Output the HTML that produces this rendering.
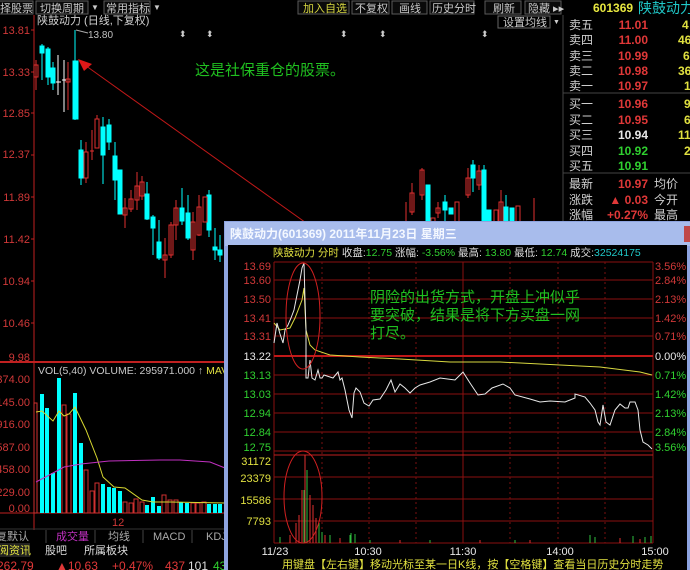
<!DOCTYPE html>
<html><head><meta charset="utf-8"><style>
html,body{margin:0;padding:0;background:#000;width:690px;height:570px;overflow:hidden}
svg{display:block}
text{font-family:"Liberation Sans","Noto Sans CJK SC",sans-serif}
</style></head><body>
<svg width="690" height="570" viewBox="0 0 690 570" xmlns="http://www.w3.org/2000/svg">
<rect width="690" height="570" fill="#000"/>
<!-- toolbar -->
<g font-size="11" fill="#c8c8c8">
<rect x="-2" y="1" width="35" height="13" fill="#0a0a0a" stroke="#5a5a5a"/><text x="0" y="12">择股票</text>
<rect x="36" y="1" width="52" height="13" fill="#0a0a0a" stroke="#5a5a5a"/><text x="40" y="12">切换周期</text>
<text x="91" y="10" font-size="8">▼</text>
<rect x="104" y="1" width="46" height="13" fill="#0a0a0a" stroke="#5a5a5a"/><text x="106" y="12">常用指标</text>
<text x="153" y="10" font-size="8">▼</text>
<rect x="298" y="1" width="51" height="13" fill="#0a0a0a" stroke="#5a5a5a"/><text x="303" y="12" fill="#d8d840">加入自选</text>
<rect x="352" y="1" width="37" height="13" fill="#0a0a0a" stroke="#5a5a5a"/><text x="355" y="12">不复权</text>
<rect x="392" y="1" width="35" height="13" fill="#0a0a0a" stroke="#5a5a5a"/><text x="399" y="12">画线</text>
<rect x="430" y="1" width="44" height="13" fill="#0a0a0a" stroke="#5a5a5a"/><text x="432" y="12">历史分时</text>
<rect x="485" y="1" width="36" height="13" fill="#0a0a0a" stroke="#5a5a5a"/><text x="493" y="12">刷新</text>
<rect x="525" y="1" width="36" height="13" fill="#0a0a0a" stroke="#5a5a5a"/><text x="528" y="12">隐藏 ▸▸</text>
</g>
<text x="593" y="12" font-size="12" font-weight="bold" fill="#e8e840">601369</text>
<text x="638" y="13" font-size="14" fill="#20c8c8">陕鼓动力</text>
<!-- right panel -->
<line x1="563" y1="15" x2="563" y2="225" stroke="#444"/>
<line x1="563" y1="93" x2="690" y2="93" stroke="#444"/>
<line x1="563" y1="173" x2="690" y2="173" stroke="#444"/>
<g font-size="12" fill="#d0d0d0">
<text x="569" y="29">卖五</text><text x="569" y="44">卖四</text><text x="569" y="60">卖三</text><text x="569" y="75">卖二</text><text x="569" y="90">卖一</text>
<text x="569" y="108">买一</text><text x="569" y="124">买二</text><text x="569" y="139">买三</text><text x="569" y="155">买四</text><text x="569" y="170">买五</text>
<text x="569" y="188">最新</text><text x="569" y="204">涨跌</text><text x="569" y="219">涨幅</text>
<text x="654" y="188">均价</text><text x="654" y="204">今开</text><text x="654" y="219">最高</text>
</g>
<g font-size="12" font-weight="bold" text-anchor="end">
<g fill="#e03838"><text x="648" y="29">11.01</text><text x="648" y="44">11.00</text><text x="648" y="60">10.99</text><text x="648" y="75">10.98</text><text x="648" y="90">10.97</text><text x="648" y="108">10.96</text><text x="648" y="124">10.95</text><text x="648" y="188">10.97</text><text x="648" y="204">▲ 0.03</text><text x="648" y="219">+0.27%</text></g>
<text x="648" y="139" fill="#e8e8e8">10.94</text>
<g fill="#30d030"><text x="648" y="155">10.92</text><text x="648" y="170">10.91</text></g>
<g fill="#e0e040" text-anchor="start"><text x="682" y="29">4</text><text x="678" y="44">46</text><text x="683" y="60">6</text><text x="678" y="75">36</text><text x="684" y="90">1</text><text x="684" y="108">9</text><text x="684" y="124">6</text><text x="678" y="139">11</text><text x="684" y="155">2</text></g>
</g>
<!-- K chart axes -->
<line x1="34" y1="15" x2="34" y2="530" stroke="#c02020"/>
<line x1="0" y1="362" x2="563" y2="362" stroke="#c02020" stroke-width="2"/>
<line x1="0" y1="513" x2="225" y2="513" stroke="#c02020"/>
<g font-size="11" fill="#d03838" text-anchor="end">
<text x="30" y="34">13.81</text><text x="30" y="76">13.33</text><text x="30" y="117">12.85</text><text x="30" y="158">12.37</text><text x="30" y="201">11.89</text><text x="30" y="243">11.42</text><text x="30" y="285">10.94</text><text x="30" y="327">10.46</text><text x="30" y="361">9.98</text>
<text x="30" y="383">374.00</text><text x="30" y="406">145.00</text><text x="30" y="428">916.00</text><text x="30" y="451">587.00</text><text x="30" y="473">458.00</text><text x="30" y="496">229.00</text><text x="30" y="512">0.00</text>
</g>
<g stroke="#c02020"><line x1="31" y1="30" x2="34" y2="30"/><line x1="31" y1="72" x2="34" y2="72"/><line x1="31" y1="113" x2="34" y2="113"/><line x1="31" y1="155" x2="34" y2="155"/><line x1="31" y1="197" x2="34" y2="197"/><line x1="31" y1="239" x2="34" y2="239"/><line x1="31" y1="281" x2="34" y2="281"/><line x1="31" y1="323" x2="34" y2="323"/></g>
<text x="37" y="24" font-size="11" fill="#d0d0d0">陕鼓动力 (日线,下复权)</text>
<text x="88" y="38" font-size="10" fill="#c0c0c0">13.80</text>
<line x1="76" y1="30" x2="88" y2="33" stroke="#aaa"/>
<g font-size="9" fill="#ccc"><text x="179" y="37">⬍</text><text x="206" y="37">⬍</text><text x="340" y="37">⬍</text><text x="379" y="37">⬍</text><text x="481" y="37">⬍</text></g>
<rect x="498" y="16" width="52" height="12" fill="#000" stroke="#666"/><text x="503" y="26" font-size="11" fill="#ccc">设置均线</text><text x="553" y="24" font-size="7" fill="#ccc">▼</text>
<text x="195" y="75" font-size="15" fill="#20c020">这是社保重仓的股票。</text>
<!-- candles -->
<g stroke="#00ffff" fill="#00ffff">
<line x1="42" y1="44" x2="42" y2="80"/><rect x="40" y="46" width="4" height="7"/>
<line x1="48" y1="47" x2="48" y2="85"/><rect x="46" y="49" width="4" height="28"/>
<line x1="53" y1="62" x2="53" y2="90"/><rect x="51" y="68" width="4" height="15"/>
<line x1="75" y1="30" x2="75" y2="120"/><rect x="73" y="61" width="5" height="58"/>
<line x1="81" y1="140" x2="81" y2="185"/><rect x="79" y="150" width="4" height="28"/>
<line x1="103" y1="117" x2="103" y2="184"/><rect x="101" y="127" width="4" height="28"/>
<line x1="109" y1="119" x2="109" y2="150"/><rect x="107" y="125" width="4" height="17"/>
<line x1="115" y1="142" x2="115" y2="200"/><rect x="113" y="156" width="4" height="24"/>
<rect x="118" y="170" width="4" height="44"/>
<line x1="147" y1="182" x2="147" y2="220"/><rect x="145" y="194" width="4" height="25"/>
<line x1="153" y1="215" x2="153" y2="255"/><rect x="151" y="217" width="4" height="11"/>
<line x1="159" y1="220" x2="159" y2="260"/><rect x="157" y="242" width="4" height="16"/>
<line x1="182" y1="188" x2="182" y2="225"/><rect x="180" y="208" width="4" height="13"/>
<line x1="188" y1="195" x2="188" y2="240"/><rect x="186" y="213" width="4" height="25"/>
<line x1="209" y1="190" x2="209" y2="237"/><rect x="207" y="195" width="4" height="35"/>
<line x1="215" y1="228" x2="215" y2="260"/><rect x="213" y="247" width="4" height="3"/>
<line x1="220" y1="235" x2="220" y2="262"/><rect x="218" y="250" width="4" height="5"/>
<line x1="428" y1="185" x2="428" y2="222"/><rect x="426" y="185" width="4" height="37"/>
<line x1="445" y1="195" x2="445" y2="222"/><rect x="443" y="202" width="4" height="8"/>
<rect x="449" y="208" width="4" height="6"/>
<line x1="473" y1="160" x2="473" y2="192"/><rect x="471" y="165" width="4" height="13"/>
<line x1="484" y1="165" x2="484" y2="222"/><rect x="482" y="170" width="4" height="52"/>
<rect x="487" y="210" width="4" height="12"/>
<line x1="506" y1="195" x2="506" y2="222"/><rect x="504" y="207" width="4" height="15"/>
<rect x="510" y="208" width="4" height="14"/>
</g>
<g stroke="#e03030" fill="none">
<rect x="34" y="65" width="4" height="12"/><line x1="36" y1="60" x2="36" y2="90"/>
<line x1="68" y1="62" x2="68" y2="110"/><rect x="66" y="79" width="4" height="3"/>
<rect x="84" y="152" width="4" height="26"/><line x1="86" y1="142" x2="86" y2="152"/><line x1="86" y1="178" x2="86" y2="183"/>
<line x1="92" y1="130" x2="92" y2="160"/><line x1="90" y1="151" x2="94" y2="151"/>
<rect x="95" y="119" width="4" height="29"/><line x1="97" y1="115" x2="97" y2="119"/>
<rect x="123" y="208" width="4" height="7"/><line x1="125" y1="198" x2="125" y2="228"/>
<rect x="129" y="199" width="4" height="10"/><line x1="131" y1="190" x2="131" y2="212"/>
<rect x="135" y="186" width="4" height="14"/><line x1="137" y1="172" x2="137" y2="210"/>
<rect x="140" y="182" width="4" height="14"/><line x1="142" y1="176" x2="142" y2="200"/>
<rect x="163" y="255" width="4" height="5"/><line x1="165" y1="238" x2="165" y2="278"/>
<rect x="169" y="225" width="4" height="30"/><line x1="171" y1="222" x2="171" y2="258"/>
<rect x="174" y="208" width="4" height="17"/><line x1="176" y1="200" x2="176" y2="240"/>
<rect x="191" y="222" width="4" height="28"/><line x1="193" y1="212" x2="193" y2="260"/>
<rect x="197" y="207" width="4" height="28"/><line x1="199" y1="195" x2="199" y2="236"/>
<rect x="203" y="197" width="4" height="25"/>
<line x1="406" y1="202" x2="406" y2="222"/><rect x="410" y="193" width="4" height="19"/><line x1="412" y1="183" x2="412" y2="215"/>
<rect x="420" y="170" width="4" height="25"/><line x1="422" y1="168" x2="422" y2="200"/>
<rect x="431" y="218" width="4" height="4"/><rect x="436" y="208" width="4" height="5"/><line x1="438" y1="202" x2="438" y2="218"/>
<rect x="455" y="202" width="4" height="20"/><rect x="466" y="178" width="4" height="17"/><line x1="468" y1="168" x2="468" y2="198"/>
<rect x="477" y="171" width="4" height="14"/><line x1="479" y1="165" x2="479" y2="190"/>
<rect x="494" y="210" width="4" height="12"/><rect x="499" y="202" width="4" height="20"/><line x1="501" y1="190" x2="501" y2="222"/>
<rect x="516" y="206" width="4" height="16"/><line x1="534" y1="198" x2="534" y2="222"/>
</g>
<g stroke="#fff"><line x1="58" y1="55" x2="58" y2="95"/><line x1="56" y1="82" x2="61" y2="82"/><line x1="64" y1="60" x2="64" y2="112"/><line x1="62" y1="80" x2="66" y2="80"/></g>
<!-- arrow -->
<line x1="82" y1="63" x2="330" y2="240" stroke="#c01818"/>
<polygon points="78,59 92,64 84,71" fill="#e01818"/>
<!-- volume -->
<text x="38" y="374" font-size="10.5" fill="#c8c8c8">VOL(5,40)  VOLUME: 295971.000 ↑ <tspan fill="#e0e040">MAV</tspan></text>
<g fill="#00ffff">
<rect x="40" y="394" width="4" height="119"/><rect x="45" y="408" width="4" height="105"/><rect x="51" y="473" width="4" height="40"/><rect x="57" y="378" width="4" height="135"/><rect x="73" y="393" width="4" height="120"/><rect x="79" y="443" width="4" height="70"/><rect x="101" y="484" width="4" height="29"/><rect x="107" y="487" width="4" height="26"/><rect x="112" y="488" width="4" height="25"/><rect x="118" y="491" width="4" height="22"/><rect x="145" y="505" width="4" height="8"/><rect x="151" y="497" width="4" height="16"/><rect x="157" y="506" width="4" height="7"/><rect x="179" y="502" width="4" height="11"/><rect x="185" y="503" width="4" height="10"/><rect x="207" y="504" width="4" height="9"/><rect x="213" y="504" width="4" height="9"/><rect x="218" y="504" width="4" height="9"/>
</g>
<g fill="none" stroke="#d03030">
<rect x="34" y="403" width="3" height="110"/><rect x="62" y="405" width="4" height="108"/><rect x="67" y="414" width="4" height="99"/><rect x="84" y="470" width="4" height="43"/><rect x="90" y="491" width="4" height="22"/><rect x="95" y="483" width="4" height="30"/><rect x="123" y="502" width="4" height="11"/><rect x="129" y="503" width="4" height="10"/><rect x="134" y="499" width="4" height="14"/><rect x="140" y="502" width="4" height="11"/><rect x="162" y="495" width="4" height="18"/><rect x="168" y="500" width="4" height="13"/><rect x="174" y="500" width="4" height="13"/><rect x="191" y="503" width="4" height="10"/><rect x="196" y="503" width="4" height="10"/><rect x="202" y="502" width="4" height="11"/>
</g>
<polyline fill="none" stroke="#d8d830" points="36,412 42,411 53,421 59,411 64,416 69,414 75,407 86,430 97,458 103,477 114,487 125,488 142,500 153,502 170,502 225,503"/>
<polyline fill="none" stroke="#c030c0" points="36,482 53,473 64,467 81,464 109,461 160,460 180,460 210,462 225,468"/>
<text x="112" y="526" font-size="11" fill="#d03838">12</text>
<line x1="0" y1="529" x2="225" y2="529" stroke="#333"/>
<g font-size="11" fill="#aaa"><text x="-4" y="540">复默认</text><text x="56" y="540" fill="#c030c0">成交量</text><text x="108" y="540">均线</text><text x="153" y="540">MACD</text><text x="206" y="540">KDJ</text></g>
<g stroke="#444"><line x1="46" y1="530" x2="46" y2="543"/><line x1="95" y1="530" x2="95" y2="543"/><line x1="143" y1="530" x2="143" y2="543"/><line x1="192" y1="530" x2="192" y2="543"/></g>
<rect x="0" y="543" width="30" height="14" fill="#222"/>
<g font-size="11"><text x="-2" y="554" fill="#e0e040">阅资讯</text><text x="45" y="554" fill="#ddd">股吧</text><text x="84" y="554" fill="#ddd">所属板块</text></g>
<g font-size="12"><text x="-3" y="570" fill="#e03838">262.79</text><text x="56" y="570" fill="#e03838">▲10.63</text><text x="112" y="570" fill="#e03838">+0.47%</text><text x="165" y="570" fill="#e03838">437</text><text x="188" y="570" fill="#ddd">101</text><text x="213" y="570" fill="#30d030">43</text></g>
<!-- popup -->
<rect x="224" y="221" width="466" height="349" fill="#8ea4e0"/>
<rect x="225" y="222" width="465" height="24" fill="#a8bcec"/>
<text x="230" y="238" font-size="12" font-weight="bold" fill="#f4f8ff">陕鼓动力(601369)  2011年11月23日  星期三</text>
<rect x="684" y="226" width="8" height="16" fill="#c04848"/>
<rect x="228" y="245" width="459" height="325" fill="#000"/>
<text x="273" y="256" font-size="10.5" fill="#ddd"><tspan fill="#e0e040">陕鼓动力  分时</tspan>   收盘:<tspan fill="#30d030">12.75</tspan> 涨幅: <tspan fill="#30d030">-3.56%</tspan>  最高: <tspan fill="#30d030">13.80</tspan>  最低: <tspan fill="#30d030">12.74</tspan>  成交:<tspan fill="#20c8c8">32524175</tspan></text>
<g stroke="#8a1010">
<line x1="274" y1="262" x2="653" y2="262"/><line x1="274" y1="280" x2="653" y2="280"/><line x1="274" y1="299" x2="653" y2="299"/><line x1="274" y1="318" x2="653" y2="318"/><line x1="274" y1="336" x2="653" y2="336"/><line x1="274" y1="375" x2="653" y2="375"/><line x1="274" y1="394" x2="653" y2="394"/><line x1="274" y1="413" x2="653" y2="413"/><line x1="274" y1="432" x2="653" y2="432"/><line x1="274" y1="451" x2="653" y2="451"/>
<line x1="274" y1="477" x2="653" y2="477"/><line x1="274" y1="499" x2="653" y2="499"/><line x1="274" y1="521" x2="653" y2="521"/><line x1="274" y1="543" x2="653" y2="543"/>
<line x1="274" y1="262" x2="274" y2="543"/><line x1="653" y1="262" x2="653" y2="543"/><line x1="463" y1="262" x2="463" y2="543"/>
<line x1="274" y1="455" x2="653" y2="455" stroke="#c02020"/>
</g>
<line x1="274" y1="356" x2="653" y2="356" stroke="#c01818" stroke-width="2"/>
<g stroke="#7a1010" stroke-dasharray="2,3"><line x1="322" y1="262" x2="322" y2="543"/><line x1="369" y1="262" x2="369" y2="543"/><line x1="416" y1="262" x2="416" y2="543"/><line x1="510" y1="262" x2="510" y2="543"/><line x1="558" y1="262" x2="558" y2="543"/><line x1="605" y1="262" x2="605" y2="543"/></g>
<g font-size="11" text-anchor="end">
<g fill="#d03838"><text x="271" y="270">13.69</text><text x="271" y="284">13.60</text><text x="271" y="303">13.50</text><text x="271" y="322">13.41</text><text x="271" y="340">13.31</text></g>
<text x="271" y="360" fill="#e8e8e8">13.22</text>
<g fill="#30d030"><text x="271" y="379">13.13</text><text x="271" y="398">13.03</text><text x="271" y="417">12.94</text><text x="271" y="436">12.84</text><text x="271" y="451">12.75</text></g>
<g fill="#e0e040"><text x="271" y="465">31172</text><text x="271" y="482">23379</text><text x="271" y="504">15586</text><text x="271" y="525">7793</text></g>
</g>
<g font-size="11">
<g fill="#d03838"><text x="655" y="270">3.56%</text><text x="655" y="284">2.84%</text><text x="655" y="303">2.13%</text><text x="655" y="322">1.42%</text><text x="655" y="340">0.71%</text></g>
<text x="655" y="360" fill="#e8e8e8">0.00%</text>
<g fill="#30d030"><text x="655" y="379">0.71%</text><text x="655" y="398">1.42%</text><text x="655" y="417">2.13%</text><text x="655" y="436">2.84%</text><text x="655" y="451">3.56%</text></g>
</g>
<g font-size="15" fill="#20c020"><text x="370" y="302">阴险的出货方式，开盘上冲似乎</text><text x="370" y="320">要突破，结果是将下方买盘一网</text><text x="370" y="338">打尽。</text></g>
<polyline fill="none" stroke="#d8d840" points="274,323 280,330 290,328 295,318 302,300 304,288 306,330 310,345 315,350 330,355 360,357 400,359 450,362 500,362 560,365 600,367 640,372 652,375"/>
<polyline fill="none" stroke="#e8e8e8" points="274,343 277,323 280,334 283,343 285,330 288,325 291,318 294,310 297,295 300,280 302,268 304,263 305,300 306,330 306,378 308,378 310,360 312,378 315,380 318,370 320,378 322,378 324,375 333,378 338,372 340,380 342,378 345,390 349,410 352,418 354,393 356,388 360,392 364,403 369,406 373,400 380,399 386,390 391,380 395,392 400,384 405,388 410,393 415,388 420,385 430,382 440,378 455,380 463,372 470,383 478,395 485,394 492,388 503,384 510,388 515,395 530,399 540,402 550,401 565,402 575,398 575,394 585,397 590,403 595,410 598,422 600,425 603,405 606,422 610,425 615,410 620,404 625,408 628,408 630,402 635,402 638,410 640,430 643,442 648,445 652,449"/>
<g stroke="#e03030"><line x1="296" y1="543" x2="296" y2="523"/><line x1="299" y1="543" x2="299" y2="515"/><line x1="302" y1="543" x2="302" y2="490"/><line x1="305" y1="543" x2="305" y2="455"/><line x1="310" y1="543" x2="310" y2="495"/><line x1="313" y1="543" x2="313" y2="505"/><line x1="316" y1="543" x2="316" y2="518"/><line x1="290" y1="543" x2="290" y2="535"/><line x1="325" y1="543" x2="325" y2="535"/><line x1="340" y1="543" x2="340" y2="538"/><line x1="400" y1="543" x2="400" y2="540"/><line x1="480" y1="543" x2="480" y2="540"/><line x1="530" y1="543" x2="530" y2="540"/><line x1="620" y1="543" x2="620" y2="538"/><line x1="640" y1="543" x2="640" y2="539"/></g>
<g stroke="#30c040"><line x1="304" y1="543" x2="304" y2="490"/><line x1="307" y1="543" x2="307" y2="470"/><line x1="319" y1="543" x2="319" y2="523"/><line x1="322" y1="543" x2="322" y2="532"/><line x1="330" y1="543" x2="330" y2="535"/><line x1="350" y1="543" x2="350" y2="535"/><line x1="355" y1="543" x2="355" y2="537"/><line x1="351" y1="543" x2="351" y2="533"/><line x1="355" y1="543" x2="355" y2="534"/><line x1="280" y1="543" x2="280" y2="537"/><line x1="370" y1="543" x2="370" y2="540"/><line x1="430" y1="543" x2="430" y2="540"/><line x1="515" y1="543" x2="515" y2="540"/><line x1="590" y1="543" x2="590" y2="535"/><line x1="595" y1="543" x2="595" y2="537"/><line x1="633" y1="543" x2="633" y2="536"/><line x1="645" y1="543" x2="645" y2="537"/><line x1="651" y1="543" x2="651" y2="536"/></g>
<ellipse cx="303" cy="316" rx="17" ry="53" fill="none" stroke="#d02020"/>
<ellipse cx="303" cy="497" rx="19" ry="46" fill="none" stroke="#d02020"/>
<g font-size="11" fill="#e8e8e8" text-anchor="middle"><text x="275" y="555">11/23</text><text x="368" y="555">10:30</text><text x="463" y="555">11:30</text><text x="560" y="555">14:00</text><text x="655" y="555">15:00</text></g>
<text x="282" y="568" font-size="11" fill="#e0e040">用键盘【左右键】移动光标至某一日K线，按【空格键】查看当日历史分时走势</text>
</svg>
</body></html>
